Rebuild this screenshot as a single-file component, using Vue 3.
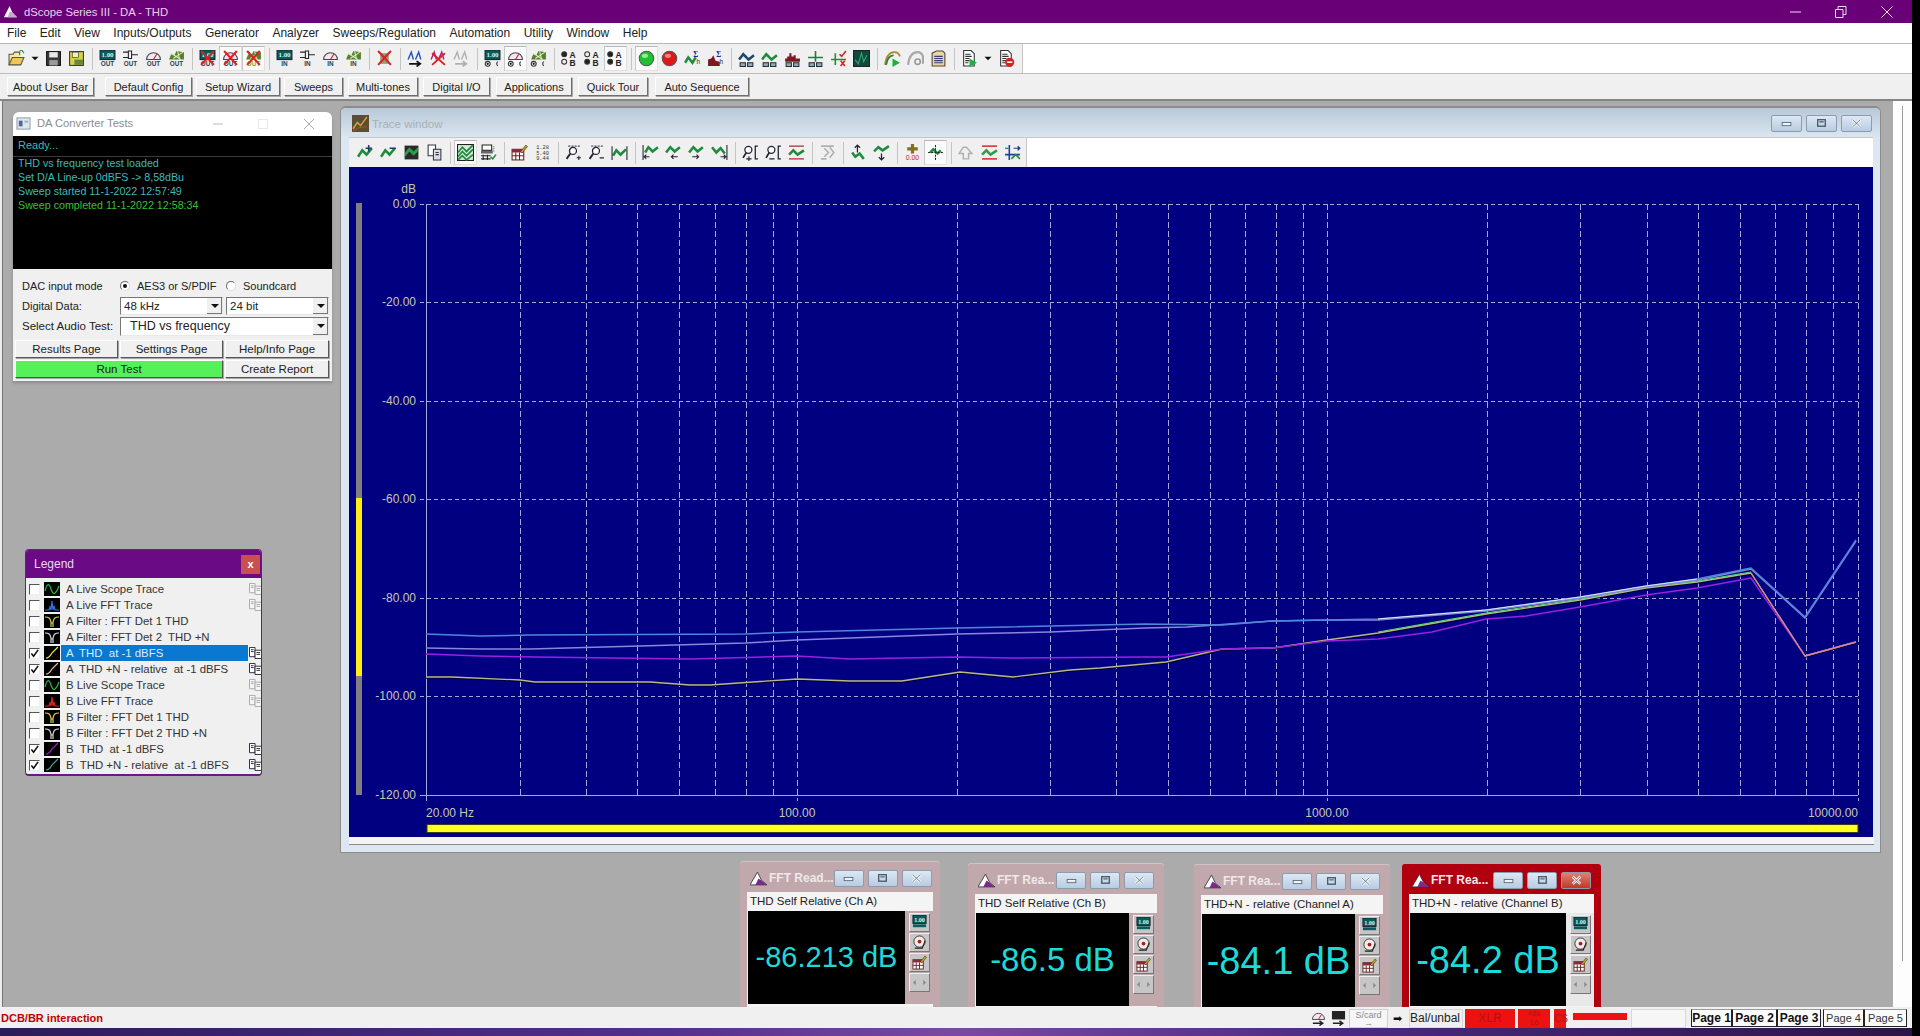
<template>
  <div class="screen">
    <div class="main">
      <div class="titlebar">
        <svg class="app-icon" viewBox="0 0 16 16"><path d="M1 14L7 2l3 7 5 5z" fill="#fff" /><path d="M7 8l3 1 5 5H5z" fill="#c9a6d6" /></svg>
        <span class="app-title">dScope Series III - DA - THD</span>
        <div class="win-controls">
          <svg viewBox="0 0 12 12" class="wc wc-min"><path d="M0 6h11" stroke="#f0dcf4" /></svg>
          <svg viewBox="0 0 12 12" class="wc wc-max"><path d="M.5 3.5h7.5v8H.5zM3 3V.5h8v8H8" fill="none" stroke="#f0dcf4" /></svg>
          <svg viewBox="0 0 12 12" class="wc wc-close"><path d="M.5.5l11 11M11.500.500l-11 11" stroke="#f0dcf4" /></svg>
        </div>
      </div>

      <div class="menubar">
        <span v-for="m in menus" :key="m">{{ m }}</span>
      </div>

      <div class="toolbar-row">
        <div class="toolbar main-tools">
          <template v-for="(t, n) in mainTools" :key="n">
            <span v-if="t.sep" class="sep"></span>
            <span v-else class="tool" :class="{ pressed: t.pressed, narrow: t.name === 'drop' }">
              <svg viewBox="0 0 16 16" v-html="icons[t.name]"></svg>
            </span>
          </template>
        </div>
      </div>

      <div class="userbar">
        <button v-for="b in userButtons" :key="b.label" type="button" class="bevel" :style="{ width: b.w + 'px', marginRight: b.gap + 'px' }">{{ b.label }}</button>
      </div>

      <div class="top-rule"></div>

      <div class="desk-row">
        <div class="canvas">
          <!-- DA converter tests -->
          <section class="da-win">
            <header class="da-title">
              <svg class="da-icon" viewBox="0 0 16 16"><rect x="1" y="2" width="14" height="12" fill="#dfe6ee" stroke="#8c98a8" /><rect x="3" y="5" width="4" height="6" fill="#4d6a98" /><rect x="9" y="5" width="4" height="2" fill="#9fb0c4" /></svg>
              <span class="da-name">DA Converter Tests</span>
              <svg class="da-ctl c1" viewBox="0 0 10 10"><path d="M0 5h10" stroke="#bbb" /></svg>
              <svg class="da-ctl c2" viewBox="0 0 10 10"><rect x=".5" y=".5" width="9" height="9" fill="none" stroke="#e8e8e8" /></svg>
              <svg class="da-ctl c3" viewBox="0 0 10 10"><path d="M0 0l10 10M10 0L0 10" stroke="#aaa" /></svg>
            </header>
            <div class="da-log">
              <div class="ready">Ready...</div>
              <div class="log-lines">
                <div v-for="l in logLines" :key="l.t" :class="{ done: l.done }">{{ l.t }}</div>
              </div>
            </div>
            <div class="da-form">
              <div class="f-row r1">
                <label class="f-label">DAC input mode</label>
                <span class="radio on"></span><span class="radio-text aes">AES3 or S/PDIF</span>
                <span class="radio"></span><span class="radio-text">Soundcard</span>
              </div>
              <div class="f-row r2">
                <label class="f-label">Digital Data:</label>
                <div class="combo half"><span>48 kHz</span><i class="arrow"></i></div>
                <div class="combo half second"><span>24 bit</span><i class="arrow"></i></div>
              </div>
              <div class="f-row r3">
                <label class="f-label">Select Audio Test:</label>
                <div class="combo full"><span>THD vs frequency</span><i class="arrow"></i></div>
              </div>
              <div class="f-grid">
                <button type="button" class="bevel">Results Page</button>
                <button type="button" class="bevel">Settings Page</button>
                <button type="button" class="bevel">Help/Info Page</button>
                <button type="button" class="bevel run">Run Test</button>
                <button type="button" class="bevel">Create Report</button>
              </div>
            </div>
          </section>

          <!-- Legend -->
          <section class="legend">
            <header class="legend-title">
              <span>Legend</span>
              <span class="legend-x">x</span>
            </header>
            <div class="legend-body">
              <div v-for="r in legendRows" :key="r.label" class="legend-row">
                <span class="check" :class="{ checked: r.on }">
                  <svg v-if="r.on" viewBox="0 0 10 10"><path d="M1.500 5l2.500 3 5-7" fill="none" stroke="#111" stroke-width="1.800" /></svg>
                </span>
                <svg class="trace-thumb" viewBox="0 0 16 14"><rect width="16" height="14" fill="#000" /><path :d="thumbs[r.kind]" fill="none" :stroke="r.color" stroke-width="1.200" /></svg>
                <span class="legend-label" :class="{ selected: r.sel }">{{ r.label }}</span>
                <svg v-if="r.copy" class="copy" viewBox="0 0 14 13" :style="{ opacity: r.copy === 'dim' ? 0.35 : 1 }">
                  <path d="M.5.500h6v10h-6z" fill="#fff" stroke="#223" /><path d="M6.500 3.500h7v9h-7z" fill="#fff" stroke="#223" /><path d="M2 3h3M2 5h3M8 6h4M8 8h4" stroke="#223" />
                </svg>
              </div>
            </div>
          </section>

          <!-- Trace window -->
          <section class="trace-win">
            <header class="trace-title">
              <svg class="trace-icon" viewBox="0 0 16 16"><rect width="16" height="16" fill="#5a5030" /><path d="M1 13l4-6 3 3 6-8" fill="none" stroke="#d0a040" stroke-width="1.500" /><path d="M1 15l5-3 8-1" fill="none" stroke="#c04030" /></svg>
              <span class="trace-name">Trace window</span>
              <div class="caps">
                <span v-for="c in ['min', 'max', 'close']" :key="c" class="cap wide">
                  <svg viewBox="0 0 12 10" v-html="capGlyphs[c]"></svg>
                </span>
              </div>
            </header>
            <div class="trace-tools-row">
              <div class="toolbar trace-tools">
                <template v-for="(t, n) in traceTools" :key="n">
                  <span v-if="t.sep" class="sep"></span>
                  <span v-else class="tool" :class="{ pressed: t.pressed }">
                    <svg viewBox="0 0 16 16" v-html="icons[t.name]"></svg>
                  </span>
                </template>
              </div>
            </div>
            <svg class="plot" viewBox="349 167 1524 670">
              <rect x="349" y="167" width="1524" height="670" fill="#000080" />
              <rect x="356" y="203" width="6" height="592" fill="#808080" />
              <rect x="356" y="498" width="6" height="178" fill="#ffee10" />

              <g shape-rendering="crispEdges">
                <line v-for="x in minorX" :key="x" :x1="x" :x2="x" y1="204" y2="795" stroke="#a4a8dc" stroke-dasharray="6 3" />
                <line v-for="x in decadeX" :key="'t' + x" :x1="x" :x2="x" y1="204" y2="801" stroke="#a4a8dc" stroke-dasharray="6 3" />
                <line v-for="g in gridY" :key="g.y" x1="420" x2="1858" :y1="g.y" :y2="g.y" stroke="#a4a8dc" stroke-dasharray="4 3" />
                <line x1="426.500" x2="426.500" y1="204" y2="801" stroke="#a4a8dc" />
                <line x1="420" x2="1858" y1="795" y2="795" stroke="#a4a8dc" />
              </g>

              <text x="416" y="193" class="axis" text-anchor="end">dB</text>
              <text v-for="g in gridY" :key="g.label" x="416" :y="g.y + 3" class="axis" text-anchor="end">{{ g.label }}</text>
              <text x="426" y="817" class="axis">20.00 Hz</text>
              <text x="797" y="817" class="axis" text-anchor="middle">100.00</text>
              <text x="1327" y="817" class="axis" text-anchor="middle">1000.00</text>
              <text x="1858" y="817" class="axis" text-anchor="end">10000.00</text>

              <polyline v-for="t in traces" :key="t.name" :points="t.points" fill="none" :stroke="t.color" :stroke-width="t.width" :transform="t.dy ? `translate(0 ${t.dy})` : undefined" stroke-linejoin="round" />

              <rect x="427" y="824.500" width="1431" height="8" fill="#ffff20" stroke="#3a3a20" stroke-width="1" />
            </svg>
            <div class="trace-foot"></div>
          </section>

          <!-- FFT readouts -->
          <section v-for="w in readouts" :key="w.label" class="fft" :class="{ active: w.active }" :style="{ left: w.x + 'px', top: w.y - 100 + 'px', width: w.w + 'px' }">
            <header class="fft-title">
              <svg class="fft-icon" viewBox="0 0 16 14"><path d="M0 13L7 1l4 8 5 4z" fill="#fff" stroke="#333" stroke-width=".8" /><path d="M8 7l3 2 5 4H5z" fill="#7a2a8a" /></svg>
              <span class="fft-name">{{ w.title }}</span>
              <div class="caps">
                <span v-for="c in ['min', 'max', 'close']" :key="c" class="cap" :class="{ redcap: w.active && c === 'close' }">
                  <svg viewBox="0 0 12 10" v-html="capGlyphs[c]"></svg>
                </span>
              </div>
            </header>
            <div class="fft-label">{{ w.label }}</div>
            <div class="fft-body">
              <div class="fft-value" :style="{ fontSize: w.size + 'px' }">{{ w.value }}</div>
              <div class="fft-side">
                <span v-for="s in fftSide" :key="s" class="side-btn"><svg viewBox="0 0 16 16" v-html="icons[s]"></svg></span>
              </div>
            </div>
            <div class="fft-under"></div>
          </section>
        </div>
        <div class="gutter"><i></i></div>
      </div>

      <footer class="statusbar">
        <span class="status-msg">DCB/BR interaction</span>
        <div class="status-right">
          <svg class="st-ic" viewBox="0 0 16 16" v-html="icons.gOutSmall"></svg>
          <svg class="st-ic" viewBox="0 0 16 16" v-html="icons.mOutSmall"></svg>
          <span class="st-card">S/card<br />→</span>
          <span class="st-arrow">➡</span>
          <span class="st-bal">Bal/unbal</span>
          <span class="st-xlr">XLR</span>
          <span class="st-rate">48k<br />16</span>
          <span class="st-cs">CS</span>
          <span class="st-bar"><i></i></span>
          <span class="st-box"></span>
          <span class="page strong p1">Page 1</span>
          <span class="page strong p2">Page 2</span>
          <span class="page strong p3">Page 3</span>
          <span class="page p4">Page 4</span>
          <span class="page p5">Page 5</span>
        </div>
      </footer>
      <div class="taskstrip"></div>
    </div>
  </div>
</template>

<script setup>
const menus = ['File', 'Edit', 'View', 'Inputs/Outputs', 'Generator', 'Analyzer', 'Sweeps/Regulation', 'Automation', 'Utility', 'Window', 'Help']

const userButtons = [
  { label: 'About User Bar', w: 87, gap: 11 },
  { label: 'Default Config', w: 87, gap: 4 },
  { label: 'Setup Wizard', w: 84, gap: 4 },
  { label: 'Sweeps', w: 59, gap: 5 },
  { label: 'Multi-tones', w: 70, gap: 5 },
  { label: 'Digital I/O', w: 67, gap: 6 },
  { label: 'Applications', w: 76, gap: 6 },
  { label: 'Quick Tour', w: 70, gap: 7 },
  { label: 'Auto Sequence', w: 94, gap: 0 }
]

const logLines = [
  { t: 'THD vs frequency test loaded' },
  { t: 'Set D/A Line-up 0dBFS -> 8,58dBu' },
  { t: 'Sweep started 11-1-2022 12:57:49' },
  { t: 'Sweep completed 11-1-2022 12:58:34', done: true }
]

const legendRows = [
  { label: 'A Live Scope Trace', kind: 'sine', color: '#20c040', copy: 'dim' },
  { label: 'A Live FFT Trace', kind: 'fft', color: '#3070e0', copy: 'dim' },
  { label: 'A Filter : FFT Det 1 THD', kind: 'notch', color: '#d8d040' },
  { label: 'A Filter : FFT Det 2  THD +N', kind: 'notch', color: '#d8d8d8' },
  { label: 'A  THD  at -1 dBFS', kind: 'line', color: '#e8e040', on: true, sel: true, copy: 'on' },
  { label: 'A  THD +N - relative  at -1 dBFS', kind: 'line', color: '#e0b0a0', on: true, copy: 'on' },
  { label: 'B Live Scope Trace', kind: 'sine', color: '#20c040', copy: 'dim' },
  { label: 'B Live FFT Trace', kind: 'fft', color: '#e02020', copy: 'dim' },
  { label: 'B Filter : FFT Det 1 THD', kind: 'notch', color: '#d8d040' },
  { label: 'B Filter : FFT Det 2 THD +N', kind: 'notch', color: '#d8d8d8' },
  { label: 'B  THD  at -1 dBFS', kind: 'line', color: '#a020c0', on: true, copy: 'on' },
  { label: 'B  THD +N - relative  at -1 dBFS', kind: 'line', color: '#40a090', on: true, copy: 'on' }
]

const thumbs = {
  sine: 'M1 9C3 1 5 1 7 7s4 7 8-3',
  fft: 'M1 12h4l1-3 1 3 1-9 1 9 1-4 1 4h4',
  notch: 'M1 3c4 0 5 1 6 5v5M15 3c-4 0-5 1-6 5v5M7 9h2',
  line: 'M2 12c3 0 4-2 6-5l6-6'
}

const readouts = [
  { x: 740, y: 861, w: 200, title: 'FFT Read...', label: 'THD Self Relative (Ch A)', value: '-86.213 dB', size: 29 },
  { x: 968, y: 863, w: 196, title: 'FFT Rea...', label: 'THD Self Relative (Ch B)', value: '-86.5 dB', size: 33 },
  { x: 1194, y: 864, w: 196, title: 'FFT Rea...', label: 'THD+N - relative (Channel A)', value: '-84.1 dB', size: 38 },
  { x: 1402, y: 863, w: 199, title: 'FFT Rea...', label: 'THD+N - relative (Channel B)', value: '-84.2 dB', size: 38, active: true }
]

const fftSide = ['sideMeter', 'sideGauge', 'calc', 'sideArrows']

const capGlyphs = {
  min: '<rect x="2" y="4" width="8" height="3" fill="#eef3f8" stroke="#556677" stroke-width=".8"/>',
  max: '<rect x="2.500" y="1.500" width="7" height="6" fill="none" stroke="#445566" stroke-width="1.200"/><path d="M4 3.500h4" stroke="#445566"/>',
  close: '<path d="M2.500 1.500l7 6.500M9.500 1.500l-7 6.500" stroke="#f4f6f8" stroke-width="2.400"/><path d="M2.500 1.500l7 6.500M9.500 1.500l-7 6.500" stroke="#607080" stroke-width=".8"/>'
}

// toolbar icons, 16x16 markup
const tag = (t, c = '#2c3e50') => `<text x="8" y="15.500" font-size="6" font-weight="700" font-family="Liberation Sans" text-anchor="middle" fill="${c}">${t}</text>`
const meter = '<rect x="1" y="0" width="14" height="9" fill="#0a5c5c" stroke="#123"/><text x="8" y="7" font-size="6.500" font-weight="700" font-family="Liberation Serif" text-anchor="middle" fill="#d8f4e8">1.00</text>'
const conn = '<path d="M1 2h5M1 7h5M6 1h3v7H6zM9 4.500h6" stroke="#222" fill="none"/>'
const gauge = '<path d="M1.500 9a6.500 6.500 0 0 1 13 0z" fill="#f6e6ee" stroke="#445"/><path d="M8 9l3-5" stroke="#a22"/>'
const gen = '<path d="M1 9l2-5 3 1 2-4 7 1v7z" fill="#567f30"/><path d="M3 3l9 6M5 8l9-6M9 1l2 8" stroke="#dcecb8"/>'
const redX = '<path d="M2 1l12 13M14 1L2 14" stroke="#e02020" stroke-width="2"/>'
const radios = '<circle cx="3.500" cy="13" r="2.300" fill="none" stroke="#333"/><circle cx="3.500" cy="13" r="1" fill="#111"/><path d="M13 11a2.500 2.500 0 0 0 0 4" fill="none" stroke="#333"/>'
const W = (c = '#1e8c3c', d = 'M1 12l4-6 4 4 5-6') => `<path d="${d}" fill="none" stroke="${c}" stroke-width="2.400"/>`
const twin = c => `<path d="M1 9l3-7 2 7M8 9l3-7 2 7" fill="none" stroke="${c}" stroke-width="1.300"/>`
const rArrow = c => `<path d="M2 13h10M9 10.500l3.500 2.500L9 15.500" fill="none" stroke="${c}" stroke-width="1.600"/>`
const ab = (top, bot) => `<circle cx="3" cy="4" r="2.300" fill="${top ? '#222' : 'none'}" stroke="#333"/><circle cx="3" cy="11" r="2.300" fill="${bot ? '#222' : 'none'}" stroke="#333"/><text x="11" y="7.500" font-size="8" font-weight="700" font-family="Liberation Sans" text-anchor="middle" fill="#222">A</text><text x="11" y="15" font-size="8" font-weight="700" font-family="Liberation Sans" text-anchor="middle" fill="#222">B</text>`
const ball = (c, h) => `<circle cx="8" cy="8" r="6.800" fill="${c}" stroke="#555"/><ellipse cx="6.500" cy="5.500" rx="3" ry="2" fill="${h}"/>`
const sigma = '<text x="11" y="6.500" font-size="7" font-weight="700" font-family="Liberation Serif" text-anchor="middle" fill="#2020a0">Σ</text><text x="13.500" y="13" font-size="6" font-family="Liberation Sans" text-anchor="middle" fill="#222">h</text>'
const boxes = '<rect x="2" y="12" width="5" height="3.500" fill="#9ab" stroke="#233"/><rect x="9" y="12" width="5" height="3.500" fill="#9ab" stroke="#233"/>'
const doc = '<path d="M2.500.500h7l3 3v11.500h-10z" fill="#fff" stroke="#333"/><path d="M4 4h5M4 6h6M4 8h4M4 10h4M4 12h3" stroke="#333"/>'
const calc = '<rect x="1" y="5" width="11" height="10" fill="#fff" stroke="#622"/><path d="M1 5h11v3H1z" fill="#8c2a3a"/><path d="M1 11h11M4.500 8v7M8 8v7" stroke="#622"/><path d="M9 7l5-6 1.500 1.500-5 6z" fill="#c8a020" stroke="#432" stroke-width=".6"/>'
const zoomLens = '<path d="M3 2h11" stroke="#555" stroke-dasharray="2 1"/><circle cx="7.500" cy="6.500" r="3.300" fill="#fff" stroke="#223" stroke-width="1.200"/><path d="M5 9l-3.500 5" stroke="#223" stroke-width="1.800"/>'
const rangeLens = '<circle cx="6" cy="5.500" r="3.300" fill="#fff" stroke="#223" stroke-width="1.200"/><path d="M4 8l-3 5" stroke="#223" stroke-width="1.600"/><path d="M15 2h-2.500v12H15" fill="none" stroke="#223" stroke-width="1.200"/>'
const arrowDown = '<path d="M8 9v6M5.500 12.500L8 15l2.500-2.500" fill="none" stroke="#223" stroke-width="1.200"/>'

const icons = {
  folder: '<path d="M1 14V4h4l1-2h5v3" fill="#f8e8a0" stroke="#554"/><path d="M1 14l3-7h11l-3 7z" fill="#f0c850" stroke="#554"/><path d="M11 1l2-1 2 3" fill="none" stroke="#1c8c3c"/>',
  drop: '<path d="M4 6h8l-4 4z" fill="#111"/>',
  save: '<rect x="1.500" y="1.500" width="13" height="13" fill="#3a3a3a" stroke="#111"/><rect x="4" y="2" width="8" height="5" fill="#e8e8e8"/><rect x="4" y="9.500" width="8" height="5" fill="#9a9a9a"/>',
  saveY: '<rect x="1.500" y="1.500" width="13" height="13" fill="#d8d048" stroke="#333"/><rect x="4" y="2" width="6" height="5" fill="#f4f0b0" stroke="#333" stroke-width=".6"/><path d="M6 14V9h8v5z" fill="#6a8a30"/>',
  mOut: meter + tag('OUT'), cOut: conn + tag('OUT'), gOut: gauge + tag('OUT'), eOut: gen + tag('OUT'),
  mOutX: meter + tag('OUT') + redX, gOutX: gauge + tag('OUT') + redX, eX: gen + tag('OUT', '#7a3') + redX,
  mIn: meter + tag('IN'), cIn: conn + tag('IN'), gIn: gauge + tag('IN'), eIn: gen + tag('IN'),
  bigX: '<rect x="4" y="3" width="8" height="10" fill="#8aa07a"/>' + redX,
  wA: twin('#2850c0') + rArrow('#111'), wAX: twin('#a02090') + '<path d="M2 3l12 11M14 3L2 14" stroke="#e02020" stroke-width="1.800"/>', wAG: twin('#b0b0b0') + rArrow('#b0b0b0'),
  mR: meter + radios, gR: gauge + radios, eR: gen + radios,
  abA: ab(true, false), abB: ab(false, true), abC: ab(true, true),
  green: ball('#20c030', '#90f090'), red: ball('#e01818', '#f08080'),
  sigW: W('#1e8c3c', 'M1 12l3-5 4 5 3-5') + sigma,
  sigR: '<path d="M1 15V9l3-1 2-3 2 5 4 1v4z" fill="#7a1a20"/>' + sigma,
  wb1: W('#1a4a6a', 'M1 9l4-5 5 5 5-4') + boxes,
  wb2: W('#1e8c3c', 'M1 9l4-5 5 5 5-4') + boxes,
  wb3: '<path d="M1 11V8h2V6h2V3h2v3h2V5h2v3h4v3z" fill="#7a1a20"/>' + boxes,
  wb4: '<path d="M8 1v10M1 7h14" stroke="#1e7c3c" stroke-width="1.500"/>' + boxes,
  wb5: '<path d="M5 3v11M1 9h14" stroke="#1e8c3c" stroke-width="1.500"/><path d="M9 4l2 2 4-5" fill="none" stroke="#d02020" stroke-width="1.500"/><path d="M10 10l4 5M14 10l-4 5" stroke="#d02020" stroke-width="1.500"/>',
  scope: '<rect x="0.500" y="0.500" width="15" height="15" fill="#0e4a40" stroke="#222"/><path d="M2 9l3 4 3-10 2 8 3-6" fill="none" stroke="#38a868"/>',
  run: '<path d="M1 14C2 5 6 2 10 2c2 0 4 1 5 4" fill="none" stroke="#a88830" stroke-width="1.600"/><path d="M2 14C3 8 6 5 9 5" fill="none" stroke="#2a7a3a" stroke-width="1.600"/><path d="M8 8l7 4-7 4z" fill="#20b040"/>',
  runG: '<path d="M1 14C2 5 6 2 10 2c2 0 4 1 5 4v7" fill="none" stroke="#a8a8a8" stroke-width="2"/><circle cx="10" cy="11" r="2.500" fill="none" stroke="#999" stroke-width="1.500"/>',
  calcList: '<path d="M2 15V3l4-2h6l2 2v12z" fill="#e8d8a0" stroke="#543"/><path d="M4 6h8M4 8h8M4 10h8M4 12h8" stroke="#3a3a7a"/>',
  docRun: doc + '<path d="M8 8l7 4-7 4z" fill="#20b040"/>',
  docStop: doc + '<circle cx="11" cy="11.500" r="4.300" fill="#d82020"/><path d="M8.500 11.500h5" stroke="#fff" stroke-width="1.500"/>',
  wPlus: W() + '<path d="M11 1v6M8 4h6" stroke="#203a70" stroke-width="1.500"/>',
  wMinus: W() + '<path d="M9 4h6" stroke="#203a70" stroke-width="1.500"/>',
  wSave: '<rect x="1.500" y="1.500" width="13" height="13" fill="#2a2a2a"/><path d="M2 8l4-5 4 4 4-4v4l-4 4-4-4-4 5z" fill="#2aa048"/>',
  copy: '<path d="M2 1h7v10H2z" fill="#fff" stroke="#334"/><path d="M7 5h7v10H7z" fill="#d8dce4" stroke="#334"/><path d="M9 8h3M9 10h3" stroke="#334"/>',
  wZoom: '<rect x="0.500" y="0.500" width="15" height="15" fill="#d8e8d8" stroke="#222"/><path d="M1 8l4-5 4 4 6-6M1 12l4-5 4 4 6-6M1 15l4-4 4 4 6-5" fill="none" stroke="#1e8c3c" stroke-width="1.600"/>',
  wPrint: '<path d="M2 1h9v5H2z" fill="#fff" stroke="#222"/><path d="M1 6h11v3H1z" fill="#666"/><path d="M1 11h9M1 14h9M3 10v5M7 10v5" stroke="#222"/><path d="M10 12l2 2 3-4" fill="none" stroke="#1e8c3c" stroke-width="1.500"/><path d="M13 2v6" stroke="#1e8c3c" stroke-dasharray="1 1"/>',
  calc,
  nums: '<text x="8" y="5" font-size="5" font-family="Liberation Mono" text-anchor="middle" fill="#333">1.28</text><text x="8" y="10" font-size="5" font-family="Liberation Mono" text-anchor="middle" fill="#333">5.40</text><text x="8" y="15" font-size="5" font-family="Liberation Mono" text-anchor="middle" fill="#333">9.44</text>',
  zPlus: zoomLens + '<path d="M11 13h4M13 11v4" stroke="#223"/>',
  zMinus: zoomLens + '<path d="M11 13h4" stroke="#223" stroke-width="1.200"/>',
  wBars: W('#1e8c3c', 'M2 11l3-5 4 4 5-5') + '<path d="M1 2v13M15 2v13" stroke="#222"/>',
  wL: W('#1e8c3c', 'M3 8l3-5 4 4 5-4') + '<path d="M1 1v14M7 12H2M4 10l-2 2 2 2" fill="none" stroke="#223"/>',
  wDown: W('#1e8c3c', 'M1 8l4-5 4 4 5-4') + '<path d="M12 12H6M8 10l-2 2 2 2" fill="none" stroke="#223"/>',
  wUp: W('#1e8c3c', 'M1 8l4-5 4 4 5-4') + '<path d="M4 12h6M8 10l2 2-2 2" fill="none" stroke="#223"/>',
  wR: W('#1e8c3c', 'M1 3l4 5 4-4 4 5') + '<path d="M15 1v14M9 12h5M12 10l2 2-2 2" fill="none" stroke="#223"/>',
  rPlus: rangeLens + '<path d="M4 14h5M6.500 11.500v5" stroke="#223"/>',
  rMinus: rangeLens + '<path d="M4 14h5" stroke="#223" stroke-width="1.200"/>',
  wLines: '<path d="M1 2h14M1 14h14" stroke="#c02030" stroke-width="1.300"/>' + W('#1e8c3c', 'M1 10l4-4 4 4 6-4'),
  gA: '<path d="M2 2h12M2 14h5M10 3l4 5-4 5M5 4l4 4-4 4" fill="none" stroke="#b0b0b0" stroke-width="1.500"/>',
  wUpA: W('#1e8c3c', 'M2 8l3 4 4-3 4 5') + '<path d="M7 8V1M4.500 3.500L7 1l2.500 2.500" fill="none" stroke="#223" stroke-width="1.200"/>',
  wDownA: W('#1e8c3c', 'M1 7l4-4 4 3 6-4') + arrowDown,
  plus000: '<path d="M8 0v9M3 4.500h10" stroke="#807020" stroke-width="3"/><text x="8" y="15.500" font-size="6.500" font-family="Liberation Sans" text-anchor="middle" fill="#d02020">0.00</text>',
  cross: W('#1e8c3c', 'M3 8l3-3 4 4 3-3') + '<path d="M8 1v14M1 8h14" stroke="#223" stroke-dasharray="2 1"/>',
  wGray: '<path d="M1 9l4-6h3l5 6-3 0v5H5V9z" fill="none" stroke="#b0b0b0" stroke-width="1.400"/>',
  wRed: '<path d="M1 2h14M1 14h14" stroke="#e04040" stroke-width="1.500"/>' + W('#2aa048', 'M1 10l4-4 4 4 6-4'),
  wAxis: '<path d="M5 1v14M1 10h14" stroke="#2040a0" stroke-width="1.500"/><path d="M9 4h6M13 2l2 2-2 2M1 4h3" stroke="#2040a0"/><path d="M7 14l4-4 4 4" fill="none" stroke="#1e8c3c" stroke-width="1.500"/>',
  sideMeter: meter + '<rect x="1" y="10" width="14" height="3" fill="#0a5c5c"/>',
  sideGauge: '<circle cx="8" cy="7" r="6" fill="#f4eaea" stroke="#333"/><circle cx="8" cy="7" r="2" fill="#a02020"/><path d="M3 14h8l3-8" fill="none" stroke="#222" stroke-width="1.200"/>',
  sideArrows: '<path d="M1 8l3-3v6zM15 8l-3-3v6z" fill="#8a8a8a"/>',
  gOutSmall: gauge + rArrow('#222'),
  mOutSmall: '<rect x="1" y="0" width="14" height="9" fill="#222"/>' + rArrow('#222')
}

// "a b | c!" : "|" is a separator, "!" marks a pressed button
const parseTools = s => s.split(' ').map(t => (t === '|' ? { sep: true } : { name: t.replace('!', ''), pressed: t.endsWith('!') }))

const mainTools = parseTools('folder drop save saveY | mOut cOut gOut eOut | mOutX gOutX! eX! | mIn cIn gIn eIn | bigX | wA wAX wAG | mR gR! eR | abA abB abC! | green! red sigW sigR | wb1 wb2 wb3 wb4 wb5 scope | run runG calcList | docRun drop docStop')
const traceTools = parseTools('wPlus wMinus wSave copy | wZoom! wPrint | calc nums | zPlus zMinus wBars | wL wDown wUp wR | rPlus rMinus wLines | gA | wUpA wDownA | plus000 cross! | wGray wRed wAxis')

// plot scales, in page pixels
const freqX = f => Math.round(797 + 530.3 * Math.log10(f / 100)) + 0.5
const minorX = []
for (const d of [10, 100, 1000]) {
  for (let m = d === 10 ? 3 : 2; m <= 9; m++) minorX.push(freqX(m * d))
}
const decadeX = [100, 1000, 10000].map(freqX)
const gridY = [0, -20, -40, -60, -80, -100, -120].map(db => ({
  label: db.toFixed(2),
  y: Math.round(203.7 - db * 4.926) + 0.5
}))

const pts = a => a.map(p => p.join(',')).join(' ')
const tail = [[1222, 649], [1273, 648], [1327, 640], [1378, 633], [1486, 614], [1580, 600], [1646, 588], [1697, 582], [1751, 573], [1805, 656], [1856, 642]]
const yellowLine = [[426, 677], [452, 677], [520, 680], [535, 682], [650, 682], [690, 685], [710, 685], [797, 679], [850, 681], [902, 681], [960, 672], [1013, 677], [1070, 670], [1100, 668], [1166, 662], ...tail]
const purpleLine = [[426, 654], [480, 656], [535, 657], [690, 659], [797, 656], [850, 659], [957, 657], [1010, 658], [1145, 657], [1166, 657], [1222, 649], [1273, 648], [1327, 641], [1378, 639], [1432, 632], [1486, 619], [1526, 616], [1580, 607], [1646, 595], [1697, 588], [1751, 578], [1805, 656], [1856, 642]]
const lavLine = [[426, 648], [480, 649], [530, 649], [640, 646], [745, 643], [797, 640], [957, 634], [1050, 632], [1145, 628], [1187, 627], [1273, 621], [1327, 620], [1378, 620], [1486, 611], [1580, 598], [1646, 587], [1697, 580], [1751, 569], [1805, 618], [1856, 541]]
const blueLine = [[426, 634], [480, 636], [530, 635], [745, 634], [797, 632], [957, 628], [1145, 624], [1222, 625], [1273, 621], [1327, 620], [1378, 619], [1486, 610], [1580, 597], [1646, 586], [1697, 579], [1751, 568], [1805, 617], [1856, 540]]

const traces = [
  { name: 'shadow', points: pts(yellowLine), color: '#000030', width: 1.5, dy: 1 },
  { name: 'a-thd', points: pts(yellowLine), color: '#b8b888', width: 1.3 },
  { name: 'a-peak', points: pts(tail.slice(3, 9)), color: '#58e068', width: 1, dy: -1 },
  { name: 'b-thd', points: pts(purpleLine), color: '#9a20e0', width: 1.5 },
  { name: 'a-pink', points: pts(tail.slice(8)), color: '#d09088', width: 1.3 },
  { name: 'b-thdn', points: pts(lavLine), color: '#8a86dc', width: 1.5 },
  { name: 'a-thdn', points: pts(blueLine), color: '#4f86d8', width: 1.5 },
  { name: 'a-white', points: pts(blueLine.slice(10, 15)), color: '#e8e8f8', width: 1 }
]
</script>

<style scoped>
.screen {
  width: 1920px;
  height: 1036px;
  background: #000;
  font-family: "Liberation Sans", Arial, sans-serif;
  font-size: 11px;
  color: #111;
  overflow: hidden;
}

.main {
  width: 1912px;
  height: 1036px;
  display: flex;
  flex-direction: column;
}

.titlebar {
  height: 23px;
  flex: none;
  background: #6a0078;
  display: flex;
  align-items: center;
  padding-left: 3px;
  position: relative;
}

.app-icon {
  width: 15px;
  height: 15px;
}

.app-title {
  margin-left: 6px;
  font-size: 11.300px;
  color: #e6d4ea;
}

.win-controls {
  display: flex;
  margin-left: auto;
  align-items: center;
  padding-right: 19px;
}

.wc {
  width: 12px;
  height: 12px;
}

.wc-min {
  margin-right: 33px;
}

.wc-max {
  margin-right: 34px;
}

.menubar {
  height: 20px;
  flex: none;
  background: #fff;
  border-bottom: 1px solid #b8b8b8;
  box-sizing: content-box;
  display: flex;
  align-items: center;
  gap: 13.500px;
  padding-left: 7px;
  font-size: 12px;
  color: #222;
}

.toolbar-row {
  height: 29px;
  flex: none;
  background: #fff;
  border-bottom: 1px solid #bdbdbd;
  display: flex;
}

.toolbar {
  display: flex;
  align-items: center;
  background: #f0f0f0;
  border-right: 1px solid #c8c8c8;
}

.main-tools {
  width: 1023px;
  padding-left: 5px;
  box-sizing: border-box;
}

.tool {
  width: 23px;
  height: 25px;
  flex: none;
  display: flex;
  align-items: center;
  justify-content: center;
  box-sizing: border-box;
}

.tool.narrow {
  width: 14px;
}

.tool svg {
  width: 17px;
  height: 17px;
}

.tool.pressed {
  background: #fafafa;
  border: 1px solid #e0e0e0;
  border-top-color: #b8b8b8;
  border-left-color: #c8c8c8;
}

.sep {
  width: 8px;
  height: 22px;
  flex: none;
  background: linear-gradient(#c4c4c4, #c4c4c4) center / 1px 100% no-repeat;
}

.userbar {
  height: 25px;
  flex: none;
  background: #f0f0f0;
  display: flex;
  align-items: center;
  padding-left: 7px;
}

.bevel {
  height: 19px;
  padding: 0;
  font: 11px "Liberation Sans", Arial, sans-serif;
  color: #222;
  background: #f0f0f0;
  border: 1px solid;
  border-color: #fff #6e6e6e #6e6e6e #fff;
  box-shadow: 1px 1px 0 #a8a8a8;
}

.top-rule {
  height: 2px;
  flex: none;
  background: #858585;
}

.desk-row {
  flex: 1;
  display: flex;
  min-height: 0;
}

.canvas {
  flex: 1;
  position: relative;
  background: #ababab;
  overflow: hidden;
  box-shadow: inset 2px 0 #ececec, inset 3px 0 #777;
}

.gutter {
  width: 19px;
  flex: none;
  background: #fdfdfd;
  padding: 5px 0 0 9px;
  box-sizing: border-box;
}

.gutter i {
  display: block;
  width: 1px;
  height: 855px;
  background: #9a9a9a;
}

/* DA window */
.da-win {
  position: absolute;
  left: 13px;
  top: 11px;
  width: 319px;
  display: flex;
  flex-direction: column;
  border-radius: 6px 6px 0 0;
  box-shadow: 0 2px 3px #8a8a8a;
  overflow: hidden;
}

.da-title {
  height: 24px;
  box-sizing: border-box;
  padding-bottom: 2px;
  background: #fff;
  display: flex;
  align-items: center;
  padding-left: 3px;
}

.da-icon {
  width: 15px;
  height: 15px;
}

.da-name {
  margin-left: 6px;
  font-size: 11.200px;
  color: #8c8c8c;
}

.da-ctl {
  position: absolute;
  width: 10px;
  height: 10px;
  top: 7px;
}

.c1 { left: 200px; }
.c2 { left: 245px; }
.c3 { left: 291px; }

.da-log {
  height: 133px;
  background: #000;
  color: #3fb8b8;
  font-size: 10.700px;
}

.ready {
  height: 20px;
  line-height: 19px;
  padding-left: 5px;
  border-bottom: 1px solid #3a3a3a;
  font-size: 11px;
}

.log-lines {
  margin-top: -1px;
  padding-left: 5px;
  line-height: 14px;
}

.log-lines .done {
  color: #35c035;
}

.da-form {
  background: #f0f0f0;
  height: 112px;
  padding-top: 8px;
  box-sizing: border-box;
  font-size: 11px;
  color: #222;
}

.f-row {
  display: flex;
  align-items: center;
  height: 18px;
  margin-bottom: 2px;
}

.f-label {
  width: 98px;
  padding-left: 9px;
  flex: none;
  white-space: nowrap;
}

.r3 .f-label {
  font-size: 11.500px;
}

.radio {
  width: 8px;
  height: 8px;
  flex: none;
  border-radius: 50%;
  background: #fff;
  border: 1px solid;
  border-color: #666 #ddd #ddd #666;
  position: relative;
}

.radio.on::after {
  content: "";
  position: absolute;
  left: 2px;
  top: 2px;
  width: 4px;
  height: 4px;
  border-radius: 50%;
  background: #111;
}

.radio-text {
  margin-left: 7px;
  white-space: nowrap;
}

.aes {
  width: 83px;
  flex: none;
}

.radio + .aes + .radio {
  margin-left: 6px;
}

.combo {
  height: 18px;
  display: flex;
  align-items: center;
  background: #fff;
  border: 1px solid;
  border-color: #777 #e8e8e8 #e8e8e8 #777;
  box-sizing: border-box;
  padding-left: 3px;
  flex: none;
  position: relative;
  font-size: 11.500px;
}

.combo.half {
  width: 103px;
}

.combo.second {
  margin-left: 3px;
}

.combo.full {
  width: 209px;
  height: 19px;
  padding-left: 9px;
  font-size: 12.500px;
}

.arrow {
  position: absolute;
  right: 0;
  top: 0;
  bottom: 0;
  width: 15px;
  background: #f0f0f0;
  border-right: 1px solid #777;
  border-bottom: 1px solid #777;
  box-sizing: border-box;
}

.arrow::after {
  content: "";
  position: absolute;
  left: 4px;
  top: 6px;
  border: 4px solid transparent;
  border-top-color: #111;
  border-bottom: 0;
}

.f-grid {
  display: grid;
  grid-template-columns: 103px 103px 104px;
  gap: 2px;
  padding: 3px 0 0 2px;
}

.f-grid .bevel {
  height: 18px;
  font-size: 11.500px;
  background: #f0f0f0;
  border-color: #fff #555 #555 #fff;
}

.f-grid .run {
  grid-column: span 2;
  background: #55f05a;
}

/* Legend */
.legend {
  position: absolute;
  left: 25px;
  top: 448px;
  width: 237px;
  border-radius: 4px;
  overflow: hidden;
  background: #f0f0f0;
  border: 1px solid #6a1a85;
  box-sizing: border-box;
  border-bottom-width: 2px;
}

.legend-title {
  height: 28px;
  background: #6a0a85;
  display: flex;
  align-items: center;
  justify-content: space-between;
  padding: 0 1px 0 8px;
  color: #e8d8ee;
  font-size: 12px;
}

.legend-x {
  width: 19px;
  height: 19px;
  background: #c85050;
  color: #fff;
  font-size: 11px;
  font-weight: 700;
  display: flex;
  align-items: center;
  justify-content: center;
}

.legend-body {
  padding: 3px 0 0 3px;
  height: 193px;
}

.legend-row {
  height: 16px;
  display: flex;
  align-items: center;
}

.check {
  width: 11px;
  height: 11px;
  flex: none;
  background: #fff;
  border: 1px solid;
  border-color: #555 #eee #eee #555;
  box-sizing: border-box;
}

.check svg {
  display: block;
  width: 9px;
  height: 9px;
}

.trace-thumb {
  width: 16px;
  height: 14px;
  flex: none;
  margin-left: 4px;
}

.legend-label {
  flex: none;
  width: 187px;
  height: 16px;
  line-height: 16px;
  padding-left: 5px;
  box-sizing: border-box;
  margin-left: 1px;
  font-size: 11.400px;
  color: #333;
  white-space: pre;
  overflow: hidden;
}

.legend-label.selected {
  background: #0a78d0;
  color: #d8eefc;
}

.copy {
  width: 13px;
  height: 12px;
  flex: none;
  margin-left: 1px;
}

/* Trace window */
.trace-win {
  position: absolute;
  left: 340px;
  top: 5px;
  width: 1541px;
  height: 747px;
  display: flex;
  flex-direction: column;
  border-radius: 6px 6px 0 0;
  background: #dce7f1;
  border: 1px solid #8c8c8c;
  border-top: 2px solid #8c8c8c;
  box-sizing: border-box;
  padding: 0 7px 0 8px;
  overflow: hidden;
}

.trace-title {
  height: 29px;
  flex: none;
  box-sizing: border-box;
  padding: 2px 8px 0 11px;
  margin: 0 -7px 0 -8px;
  background: linear-gradient(#b7c8d8, #dbe6ef);
  display: flex;
  align-items: center;
}

.trace-icon {
  width: 17px;
  height: 17px;
}

.trace-name {
  margin-left: 3px;
  font-size: 11.500px;
  color: #a8b0b8;
}

.caps {
  display: flex;
  gap: 4px;
  margin-left: auto;
}

.cap {
  width: 30px;
  height: 17px;
  background: linear-gradient(#dce8f4, #b8cce2);
  border: 1px solid #8c9cac;
  border-radius: 2px;
  box-sizing: border-box;
  display: flex;
  align-items: center;
  justify-content: center;
}

.cap.wide {
  width: 31px;
}

.cap svg {
  width: 13px;
  height: 11px;
}

.cap.redcap {
  background: linear-gradient(#e08070, #c03828);
}

.trace-tools-row {
  height: 30px;
  flex: none;
  background: #fff;
  border-top: 1px solid #c4c8cc;
  box-sizing: border-box;
  display: flex;
}

.trace-tools {
  width: 678px;
  padding-left: 5px;
  box-sizing: border-box;
}

.plot {
  display: block;
  width: 1524px;
  height: 670px;
  flex: none;
}

.axis {
  font-family: "Liberation Sans", Arial, sans-serif;
  font-size: 12px;
  fill: #c8c8b0;
}

.trace-foot {
  height: 7px;
  flex: none;
  margin-right: -1px;
  background: #f4f4f4;
  border-bottom: 1px solid #8a8a8a;
}

/* FFT readouts */
.fft {
  position: absolute;
  height: 170px;
  background: #c0a8ac;
  border-radius: 3px 3px 0 0;
  box-sizing: border-box;
  padding: 0 7px;
  box-shadow: 0 -1px 0 #d0c4c6;
}

.fft.active {
  background: #b00010;
  box-shadow: none;
}

.fft-title {
  height: 30px;
  box-sizing: border-box;
  padding-top: 2px;
  display: flex;
  align-items: center;
  margin-right: 3px;
}

.fft-icon {
  width: 17px;
  height: 15px;
  flex: none;
  margin-left: 3px;
}

.fft-name {
  margin-left: 2px;
  font-size: 12px;
  font-weight: 700;
  color: #f0e8ea;
  white-space: nowrap;
}

.fft-label {
  height: 19px;
  line-height: 18px;
  background: #f4f4f4;
  padding-left: 3px;
  font-size: 11.500px;
  color: #222;
  white-space: nowrap;
  overflow: hidden;
}

.fft-body {
  display: flex;
  height: 93px;
  background: #f0f0f0;
}

.fft-value {
  flex: 1;
  margin-left: 1px;
  background: #000;
  color: #1fd8d8;
  display: flex;
  align-items: center;
  justify-content: center;
  white-space: nowrap;
  line-height: 1;
}

.fft-side {
  width: 28px;
  flex: none;
  display: flex;
  flex-direction: column;
  align-items: center;
  gap: 1px;
  padding-top: 2px;
  background: #c0a8ac;
}

.active .fft-side {
  background: #e8e8e8;
}

.side-btn {
  width: 21px;
  height: 19px;
  background: #c6c6c6;
  border: 1px solid;
  border-color: #eee #777 #777 #eee;
  box-sizing: border-box;
  display: flex;
  align-items: center;
  justify-content: center;
}

.side-btn svg {
  width: 15px;
  height: 15px;
}

.fft-under {
  height: 6px;
  background: #f4f4f4;
}

/* Status bar */
.statusbar {
  height: 21px;
  flex: none;
  box-sizing: border-box;
  padding-top: 1px;
  background: #f0f0f0;
  display: flex;
  align-items: center;
}

.status-msg {
  margin-left: 1px;
  font-size: 11px;
  font-weight: 700;
  color: #c00000;
}

.status-right {
  margin-left: auto;
  display: flex;
  align-items: stretch;
  height: 19px;
  padding-right: 5px;
  font-size: 11px;
}

.status-right > * {
  flex: none;
  box-sizing: border-box;
}

.st-ic {
  width: 15px;
  height: 15px;
  margin: 2px 5px 0 0;
}

.st-card {
  width: 39px;
  margin-left: -2px;
  background: #f6f6f6;
  border: 1px solid #d0d0d0;
  color: #8a8a8a;
  font-size: 9px;
  line-height: 8px;
  text-align: center;
  padding-top: 1px;
}

.st-arrow {
  width: 13px;
  margin: 0 3px 0 5px;
  font-size: 11px;
  line-height: 19px;
  font-family: "DejaVu Sans", sans-serif;
}

.st-bal {
  width: 54px;
  margin-right: 2px;
  border: 1px solid #d8d8d8;
  line-height: 17px;
  font-size: 12px;
  color: #222;
  white-space: nowrap;
  overflow: hidden;
}

.st-xlr {
  width: 50px;
  margin-right: 3px;
  background: #ee1111;
  color: #a81818;
  text-align: center;
  line-height: 19px;
  font-size: 12px;
}

.st-rate {
  width: 32px;
  margin-right: 4px;
  background: #ee1111;
  color: #a81818;
  text-align: center;
  font-size: 8px;
  line-height: 9px;
}

.st-cs {
  width: 12px;
  margin-right: 7px;
  background: #ee1111;
  color: #a81818;
  font-size: 10px;
  line-height: 19px;
  text-align: center;
}

.st-bar {
  width: 54px;
  margin-right: 4px;
}

.st-bar i {
  display: block;
  height: 7px;
  margin-top: 4px;
  background: #ee1111;
}

.st-box {
  width: 55px;
  margin-right: 5px;
  background: #f6f6f6;
  border: 1px solid #d8d8d8;
}

.page {
  height: 18px;
  text-align: center;
  line-height: 16px;
  font-size: 11px;
  background: #fbfbfb;
  border: 1px solid #222;
  border-top-color: #999;
  white-space: nowrap;
  color: #333;
}

.page.strong {
  font-size: 12px;
  font-weight: 700;
  color: #111;
}

.p1 { width: 41px; }
.p2 { width: 45px; }
.p3 { width: 44px; margin-right: 2px; }
.p4 { width: 41px; }
.p5 { width: 43px; }

.taskstrip {
  height: 8px;
  flex: none;
  background: linear-gradient(90deg, #2a1c58, #53308c 35%, #7a4aa0 50%, #4a2a80 70%, #2c1448);
}
</style>

<style>
body {
  margin: 0;
  background: #000;
}
</style>
